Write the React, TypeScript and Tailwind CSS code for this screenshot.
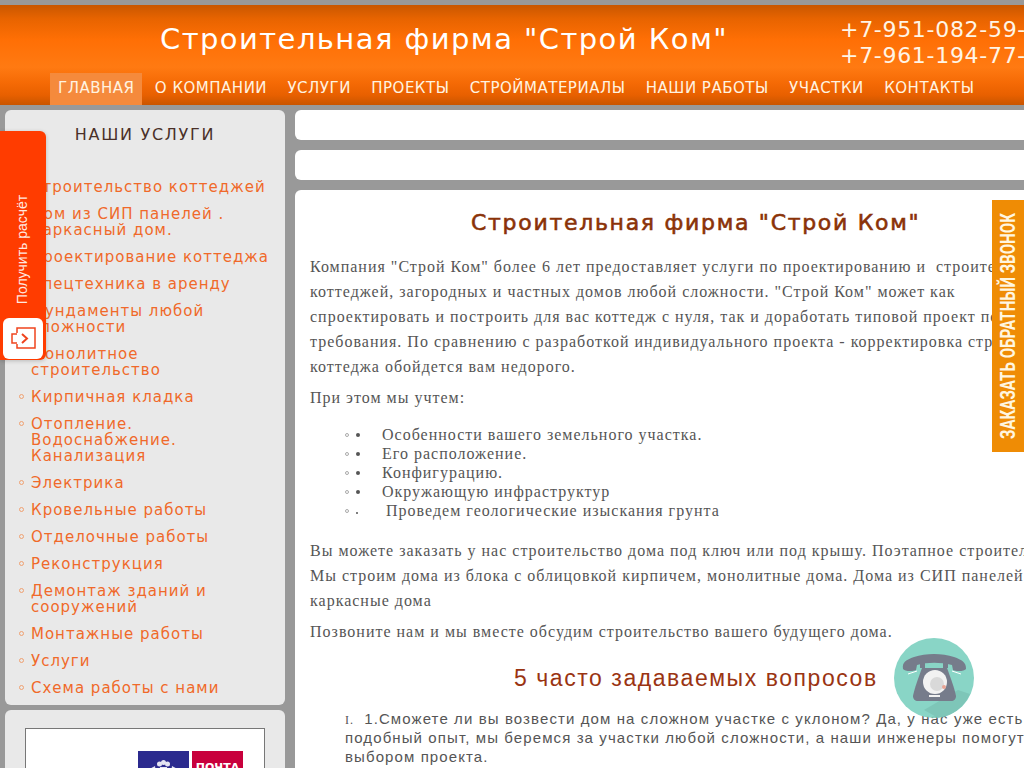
const nav = ["ГЛАВНАЯ", "О КОМПАНИИ", "УСЛУГИ", "ПРОЕКТЫ", "СТРОЙМАТЕРИАЛЫ", "НАШИ РАБОТЫ", "УЧАСТКИ", "КОНТАКТЫ"];
const services = [
  ["Строительство коттеджей"],
  ["Дом из СИП панелей .", "Каркасный дом."],
  ["Проектирование коттеджа"],
  ["Спецтехника в аренду"],
  ["Фундаменты любой", "сложности"],
  ["Монолитное", "строительство"],
  ["Кирпичная кладка"],
  ["Отопление.", "Водоснабжение.", "Канализация"],
  ["Электрика"],
  ["Кровельные работы"],
  ["Отделочные работы"],
  ["Реконструкция"],
  ["Демонтаж зданий и", "сооружений"],
  ["Монтажные работы"],
  ["Услуги"],
  ["Схема работы с нами"],
];
const bullets = ["Особенности вашего земельного участка.", "Его расположение.", "Конфигурацию.", "Окружающую инфраструктур"];
const sans = "font-['DejaVu_Sans',sans-serif]";
const serif = "font-['Liberation_Serif',serif]";

function Phone() {
  return (
    <svg viewBox="0 0 80 80" className="h-20 w-20">
      <circle cx="40" cy="40" r="40" fill="#83d3c3" />
      <path d="M30 72 L64 52 L76 56 A40 40 0 0 1 44 79.8 Z" fill="#78c4b5" />
      <path d="M9 31 C8 24 12 22 20 19 C32 15 48 15 60 19 C68 22 72 24 72 31 C71 33 63 34 59 32 L58 27 C46 24 34 24 23 27 L22 32 C18 34 10 33 9 31 Z" fill="#6f7585" />
      <path d="M14 36 L23 33 M58 33 L67 36" stroke="#fff" strokeWidth="1" />
      <path d="M26 30 H31 V25 H26 Z M49 30 H54 V25 H49 Z" fill="#6f7585" />
      <path d="M28 30 H53 C56 38 61 52 62 58 C62 61 60 63 57 63 H24 C21 63 19 61 19 58 C20 52 25 38 28 30 Z" fill="#6f7585" />
      <circle cx="41" cy="44" r="12" fill="#f2f2f2" />
      <circle cx="43" cy="46" r="7" fill="#d8d8d8" />
      <circle cx="50" cy="49" r="2" fill="#e8a090" />
      <rect x="35" y="57" width="11" height="2" fill="#f2f2f2" />
    </svg>
  );
}

export default function App() {
  return (
    <div className="relative h-[768px] w-[1024px] overflow-hidden bg-[#999999]">
      <div className="pt-[5px]">
        <header className={`h-[100px] bg-[linear-gradient(to_bottom,#c95700_0%,#e86400_14%,#ff6f05_35%,#ff7a12_62%,#f56a05_78%,#e86000_90%,#c95500_100%)] ${sans}`}>
          <div className="flex h-[68px]">
            <div className="ml-[160px] mt-[16px] w-[680px] shrink-0 whitespace-nowrap text-[29px] leading-[36px] tracking-[1.43px] text-white">Строительная фирма "Строй Ком"</div>
            <div className="mt-[12px] whitespace-nowrap text-[22px] leading-[26px] tracking-[0.7px] text-[#fff5e6]">
              <div>+7-951-082-59-</div>
              <div>+7-961-194-77-</div>
            </div>
          </div>
          <nav className="ml-[50px] flex whitespace-nowrap text-[15px] tracking-[0.5px] text-[#fff3e0]">
            {nav.map((n, i) => (
              <div key={n} className={`mr-[4.4px] flex h-[32px] items-center px-[8px] pb-[1px] ${i === 0 ? "bg-[#f58a3c]" : ""}`}>{n}</div>
            ))}
          </nav>
        </header>

        <div className="mt-[5px] flex">
          <aside className="ml-[5px] w-[280px] shrink-0">
            <div className={`h-[595px] rounded-[6px] bg-[#e9e9e9] ${sans}`}>
              <div className="pt-[15px] text-center text-[16px] leading-[20px] tracking-[1.7px] text-[#4a3028]">НАШИ УСЛУГИ</div>
              <ul className="ml-[14px] mt-[34px] flex flex-col gap-[11px] text-[15px] leading-[16px] tracking-[1px] text-[#f0692a]">
                {services.map((s) => (
                  <li key={s[0]} className="relative whitespace-nowrap pl-[12px]">
                    <span className="absolute left-0 top-[5px] h-[5px] w-[5px] rounded-full border border-[#f0a070]" />
                    {s.map((line) => <div key={line}>{line}</div>)}
                  </li>
                ))}
              </ul>
            </div>
            <div className="mt-[5px] h-[120px] rounded-[6px] bg-[#e9e9e9] px-[20px] pt-[18px]">
              <div className="flex h-[100px] justify-end gap-[3px] border border-[#777777] bg-white pr-[21px] pt-[22px]">
                <div className="h-[60px] w-[51px] bg-[#2b2a8e]">
                  <svg viewBox="0 0 51 30" className="w-[51px]">
                    <circle cx="21.5" cy="13" r="2.5" fill="#e4e4f2" />
                    <circle cx="25.5" cy="11.5" r="2.5" fill="#e4e4f2" />
                    <circle cx="29.5" cy="13" r="2.5" fill="#e4e4f2" />
                    <path d="M22 16 H29 L30 30 H21 Z M6 21 L17 15 L19 30 H12 Z M45 21 L34 15 L32 30 H39 Z" fill="#e4e4f2" />
                  </svg>
                </div>
                <div className={`h-[60px] w-[51px] bg-[#c8003c] pt-[11px] text-center text-[11px] font-bold leading-[12px] text-white ${sans}`}>ПОЧТА</div>
              </div>
            </div>
          </aside>

          <main className="ml-[10px] w-[800px] shrink-0">
            <div className="h-[30px] rounded-[6px] bg-white" />
            <div className="mt-[10px] h-[30px] rounded-[6px] bg-white" />
            <div className={`mt-[10px] h-[700px] whitespace-nowrap rounded-[6px] bg-white pl-[15px] pt-[18px] text-[16px] leading-[25px] tracking-[1px] text-[#555555] ${serif}`}>
              <h1 className={`ml-[161px] text-[22px] leading-[30px] tracking-[1.7px] text-[#8a3208] [-webkit-text-stroke:0.6px_#8a3208] ${sans}`}>Строительная фирма "Строй Ком"</h1>
              <p className="mt-[16px]">
                Компания "Строй Ком" более 6 лет предоставляет услуги по проектированию и&nbsp; строительству<br />
                коттеджей, загородных и частных домов любой сложности. "Строй Ком" может как<br />
                спроектировать и построить для вас коттедж с нуля, так и доработать типовой проект под ваши<br />
                требования. По сравнению с разработкой индивидуального проекта - корректировка строительства<br />
                коттеджа обойдется вам недорого.
              </p>
              <p className="mt-[6px]">При этом мы учтем:</p>
              <ul className="ml-[35px] mt-[15px] leading-[19px]">
                {bullets.map((b) => (
                  <li key={b} className="flex items-center">
                    <span className="h-[4px] w-[4px] rounded-full border border-[#aaaaaa]" />
                    <span className="ml-[7px] h-[4px] w-[4px] rounded-full bg-[#555555]" />
                    <span className="ml-[22px]">{b}</span>
                  </li>
                ))}
                <li className="flex items-center">
                  <span className="h-[4px] w-[4px] rounded-full border border-[#aaaaaa]" />
                  <span className="ml-[7px] mt-[4px] h-[2px] w-[2px] rounded-full bg-[#555555]" />
                  <span className="ml-[28px]">Проведем геологические изыскания грунта</span>
                </li>
              </ul>
              <p className="mt-[18px]">
                Вы можете заказать у нас строительство дома под ключ или под крышу. Поэтапное строительство<br />
                Мы строим дома из блока с облицовкой кирпичем, монолитные дома. Дома из СИП панелей,<br />
                каркасные дома
              </p>
              <p className="mt-[6px]">Позвоните нам и мы вместе обсудим строительство вашего будущего дома.</p>
              <h2 className="ml-[204px] mt-[19px] text-[23px] leading-[30px] tracking-[1.55px] text-[#9a3412] [font-family:'Liberation_Sans',sans-serif]">5 часто задаваемых вопросов</h2>
              <div className="ml-[35px] mt-[16px] text-[15px] leading-[19px] tracking-[1.1px] [font-family:'Liberation_Sans',sans-serif]">
                <span className={`mr-[10px] text-[12px] leading-none ${serif}`}>I.</span>1.Сможете ли вы возвести дом на сложном участке с уклоном? Да, у нас уже есть<br />
                подобный опыт, мы беремся за участки любой сложности, а наши инженеры помогут<br />
                выбором проекта.
              </div>
            </div>
          </main>
        </div>
      </div>

      <div className="absolute left-0 top-[131px] h-[229px] w-[46px] rounded-r-[6px] bg-[#ff3c00] shadow-[0_1px_4px_rgba(0,0,0,0.2)]">
        <div className="absolute left-[13px] top-[63px] flex h-[110px] w-[20px] items-center justify-center">
          <span className="rotate-[-90deg] whitespace-nowrap text-[14px] text-[#ffe9e0] [font-family:'Liberation_Sans',sans-serif]">Получить расчёт</span>
        </div>
        <div className="absolute left-[3px] top-[187px] flex h-[41px] w-[40px] items-center justify-center rounded-[6px] bg-white">
          <svg viewBox="0 0 26 26" className="h-[26px] w-[26px]" fill="none" stroke="#f0441e" strokeWidth="1.5">
            <path d="M7 7 V2 H25 V22 H7 V18" />
            <path d="M7 8 H2 V17 H7" />
            <path d="M12 8 L17 12.5 L12 17" strokeWidth="2" />
          </svg>
        </div>
      </div>

      <div className="absolute left-[992px] top-[200px] flex h-[252px] w-[32px] items-center justify-center bg-[#ef8c05]">
        <span className="rotate-[-90deg] scale-x-[0.755] whitespace-nowrap text-[20px] font-bold leading-none text-[#fff6e0] [font-family:'Roboto',sans-serif]">ЗАКАЗАТЬ ОБРАТНЫЙ ЗВОНОК</span>
      </div>

      <div className="absolute left-[894px] top-[638px] opacity-95"><Phone /></div>
    </div>
  );
}
